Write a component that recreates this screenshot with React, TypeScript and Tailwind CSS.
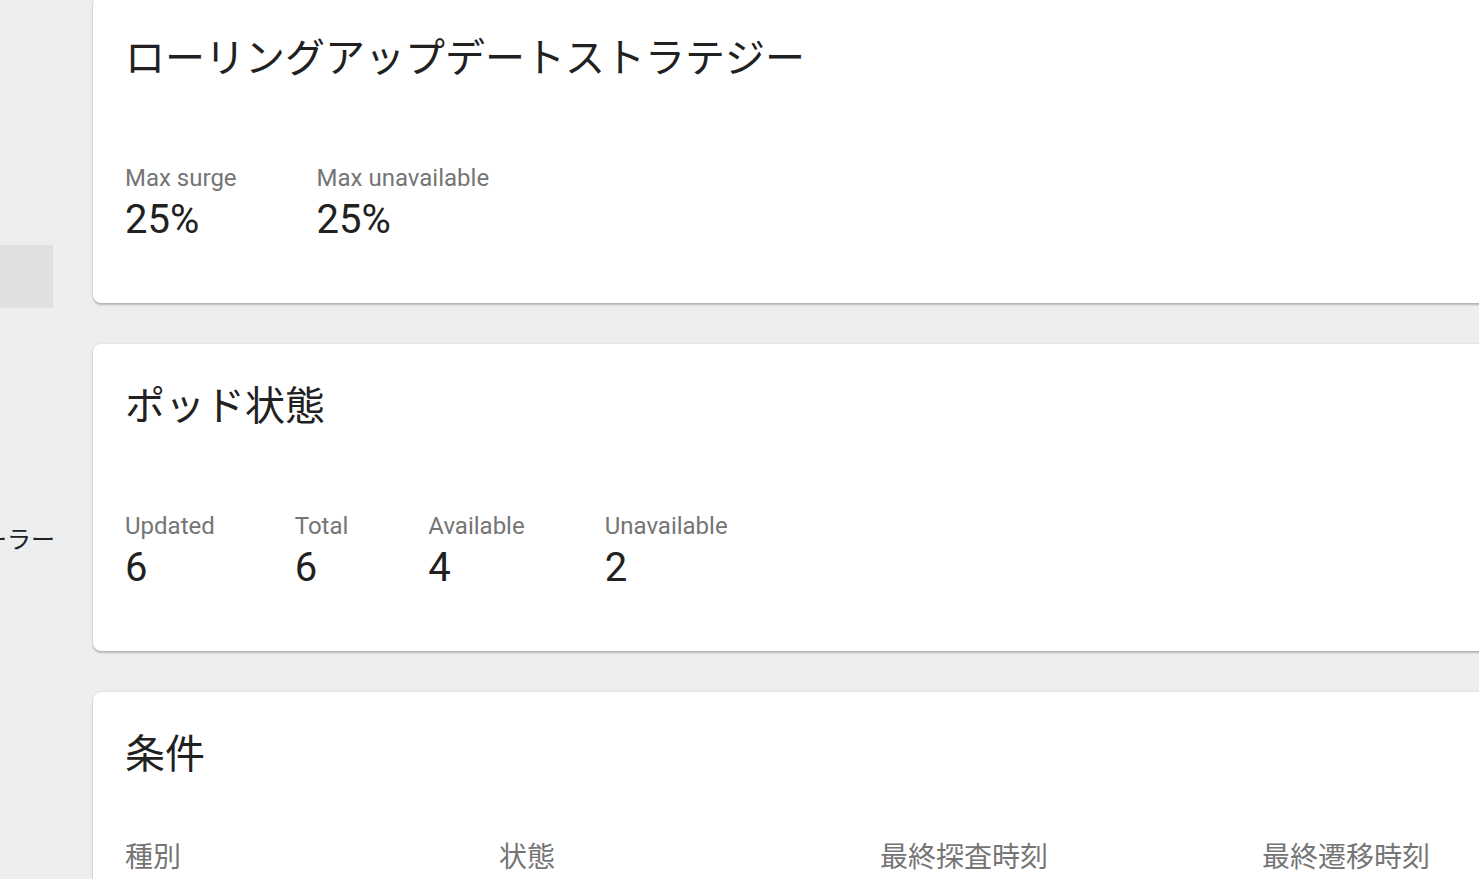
const font = { fontFamily: 'Roboto, "Noto Sans CJK JP", sans-serif' };

type Prop = { label: string; value: string };

const Property = ({ label, value }: Prop) => (
  <div className="flex flex-col">
    <span className="text-[24px] leading-[32px] text-[#757575]">{label}</span>
    <span className="mt-[2px] text-[40px] leading-[48px] text-[#212121]">{value}</span>
  </div>
);

const Card = ({ title, children, className = "" }: { title: string; children: React.ReactNode; className?: string }) => (
  <section
    className={`w-[1500px] rounded-[8px] bg-white px-[32px] pt-[39px] shadow-[0_2px_2px_rgba(0,0,0,0.22),0_0_3px_rgba(0,0,0,0.1)] ${className}`}
  >
    <h2 className="text-[40px] leading-[48px] font-normal text-[#212121]">{title}</h2>
    {children}
  </section>
);

const strategy: Prop[] = [
  { label: "Max surge", value: "25%" },
  { label: "Max unavailable", value: "25%" },
];

const pods: Prop[] = [
  { label: "Updated", value: "6" },
  { label: "Total", value: "6" },
  { label: "Available", value: "4" },
  { label: "Unavailable", value: "2" },
];

const columns = ["種別", "状態", "最終探査時刻", "最終遷移時刻"];

export default function App() {
  return (
    <div style={font} className="flex h-[879px] w-full overflow-hidden bg-[#eceef0]">
      <aside className="flex w-[53px] shrink-0 flex-col">
        <div className="mt-[245px] h-[63px] bg-[#e0e0e0]" />
        <div className="mt-[216px] flex justify-end whitespace-nowrap text-[24px] leading-[32px] text-[#212121]">
          <span className="-mr-[2px]">レプリケーションコントローラー</span>
        </div>
      </aside>
      <main className="ml-[40px] -mt-[4px] flex shrink-0 flex-col gap-[41px]">
        <Card title="ローリングアップデートストラテジー" className="pb-[59px]">
          <div className="mt-[79px] flex gap-[80px]">
            {strategy.map((p) => (
              <Property key={p.label} {...p} />
            ))}
          </div>
        </Card>
        <Card title="ポッド状態" className="pb-[59px]">
          <div className="mt-[79px] flex gap-[80px]">
            {pods.map((p) => (
              <Property key={p.label} {...p} />
            ))}
          </div>
        </Card>
        <Card title="条件" className="pb-[40px]">
          <div className="mt-[59px] grid grid-cols-[374px_381px_382px_1fr] text-[28px] leading-[40px] text-[#757575]">
            {columns.map((c) => (
              <span key={c}>{c}</span>
            ))}
          </div>
        </Card>
      </main>
    </div>
  );
}
